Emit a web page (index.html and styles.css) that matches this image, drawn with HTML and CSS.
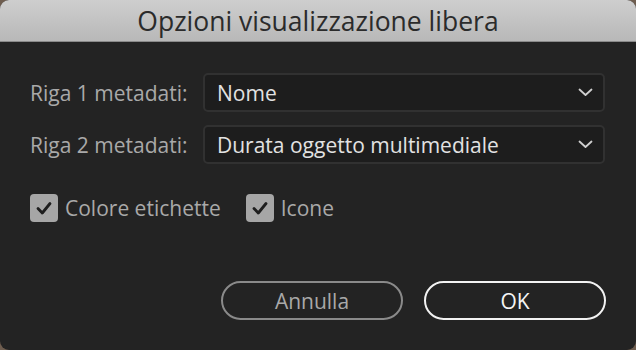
FILE: index.html
```html
<!DOCTYPE html>
<html lang="it">
<head>
<meta charset="utf-8">
<link rel="stylesheet" href="styles.css">
</head>
<body>
<div class="dialog">
  <div class="titlebar">Opzioni visualizzazione libera</div>
  <div class="content">
    <div class="fields">
      <label class="label">Riga 1 metadati:</label>
      <div class="select"><span>Nome</span>
        <svg class="chev" viewBox="0 0 15 9" width="15" height="9"><path d="M1.5 1.5 L7.5 7 L13.5 1.5" fill="none" stroke="#cfcfcf" stroke-width="1.8" stroke-linecap="round" stroke-linejoin="round"/></svg>
      </div>
      <label class="label">Riga 2 metadati:</label>
      <div class="select"><span>Durata oggetto multimediale</span>
        <svg class="chev" viewBox="0 0 15 9" width="15" height="9"><path d="M1.5 1.5 L7.5 7 L13.5 1.5" fill="none" stroke="#cfcfcf" stroke-width="1.8" stroke-linecap="round" stroke-linejoin="round"/></svg>
      </div>
    </div>
    <div class="checks">
      <div class="check"><span class="box"><svg viewBox="0 0 28 28" width="28" height="28"><path d="M8 14.5 L12.3 19 L20 9.5" fill="none" stroke="#1e1e1e" stroke-width="2.8" stroke-linecap="round" stroke-linejoin="round"/></svg></span><span class="ctext">Colore etichette</span></div>
      <div class="check"><span class="box"><svg viewBox="0 0 28 28" width="28" height="28"><path d="M8 14.5 L12.3 19 L20 9.5" fill="none" stroke="#1e1e1e" stroke-width="2.8" stroke-linecap="round" stroke-linejoin="round"/></svg></span><span class="ctext">Icone</span></div>
    </div>
    <div class="buttons">
      <button class="btn cancel">Annulla</button>
      <button class="btn ok">OK</button>
    </div>
  </div>
</div>
</body>
</html>
```

FILE: styles.css
```css
html, body {
  margin: 0;
  padding: 0;
  width: 636px;
  height: 350px;
  background: #6e5d4f;
  overflow: hidden;
}
.dialog {
  width: 636px;
  height: 350px;
  background: #232323;
  border-radius: 9px;
  overflow: hidden;
  display: flex;
  flex-direction: column;
  font-family: "Open Sans", "Noto Sans", sans-serif;
}
.titlebar {
  height: 42px;
  box-sizing: border-box;
  background: linear-gradient(#cecece, #b8b8b8);
  border-bottom: 1px solid #8a8a8a;
  color: #2b2b2b;
  font-size: 26.5px;
  display: flex;
  align-items: center;
  justify-content: center;
  padding-top: 1px;
}
.content {
  padding: 31px 30px 0 30px;
  display: flex;
  flex-direction: column;
}
.fields {
  display: grid;
  grid-template-columns: 162px 402px;
  column-gap: 11px;
  row-gap: 13px;
  align-items: center;
}
.label {
  color: #a9a9a9;
  font-size: 21px;
  white-space: nowrap;
}
.select {
  height: 39px;
  box-sizing: border-box;
  border: 2px solid #313131;
  border-radius: 5px;
  background: #1d1d1d;
  display: flex;
  align-items: center;
  justify-content: space-between;
  padding: 0 10px 0 12px;
  color: #e2e2e2;
  font-size: 21px;
}
.chev { display: block; }
.checks {
  display: flex;
  gap: 25px;
  margin-top: 30px;
}
.check {
  display: flex;
  align-items: center;
  gap: 7px;
}
.box {
  width: 28px;
  height: 28px;
  border-radius: 4px;
  background: #a6a6a6;
  display: block;
}
.box svg { display: block; }
.ctext {
  color: #a9a9a9;
  font-size: 21px;
}
.buttons {
  display: flex;
  justify-content: flex-end;
  gap: 21px;
  margin-top: 59px;
}
.btn {
  width: 182px;
  height: 39px;
  box-sizing: border-box;
  border-radius: 20px;
  background: transparent;
  font-family: "Open Sans", "Noto Sans", sans-serif;
  font-size: 21px;
  padding: 0;
}
.cancel {
  border: 2px solid #8a8a8a;
  color: #a9a9a9;
}
.ok {
  border: 2px solid #f2f2f2;
  color: #f5f5f5;
}
```
